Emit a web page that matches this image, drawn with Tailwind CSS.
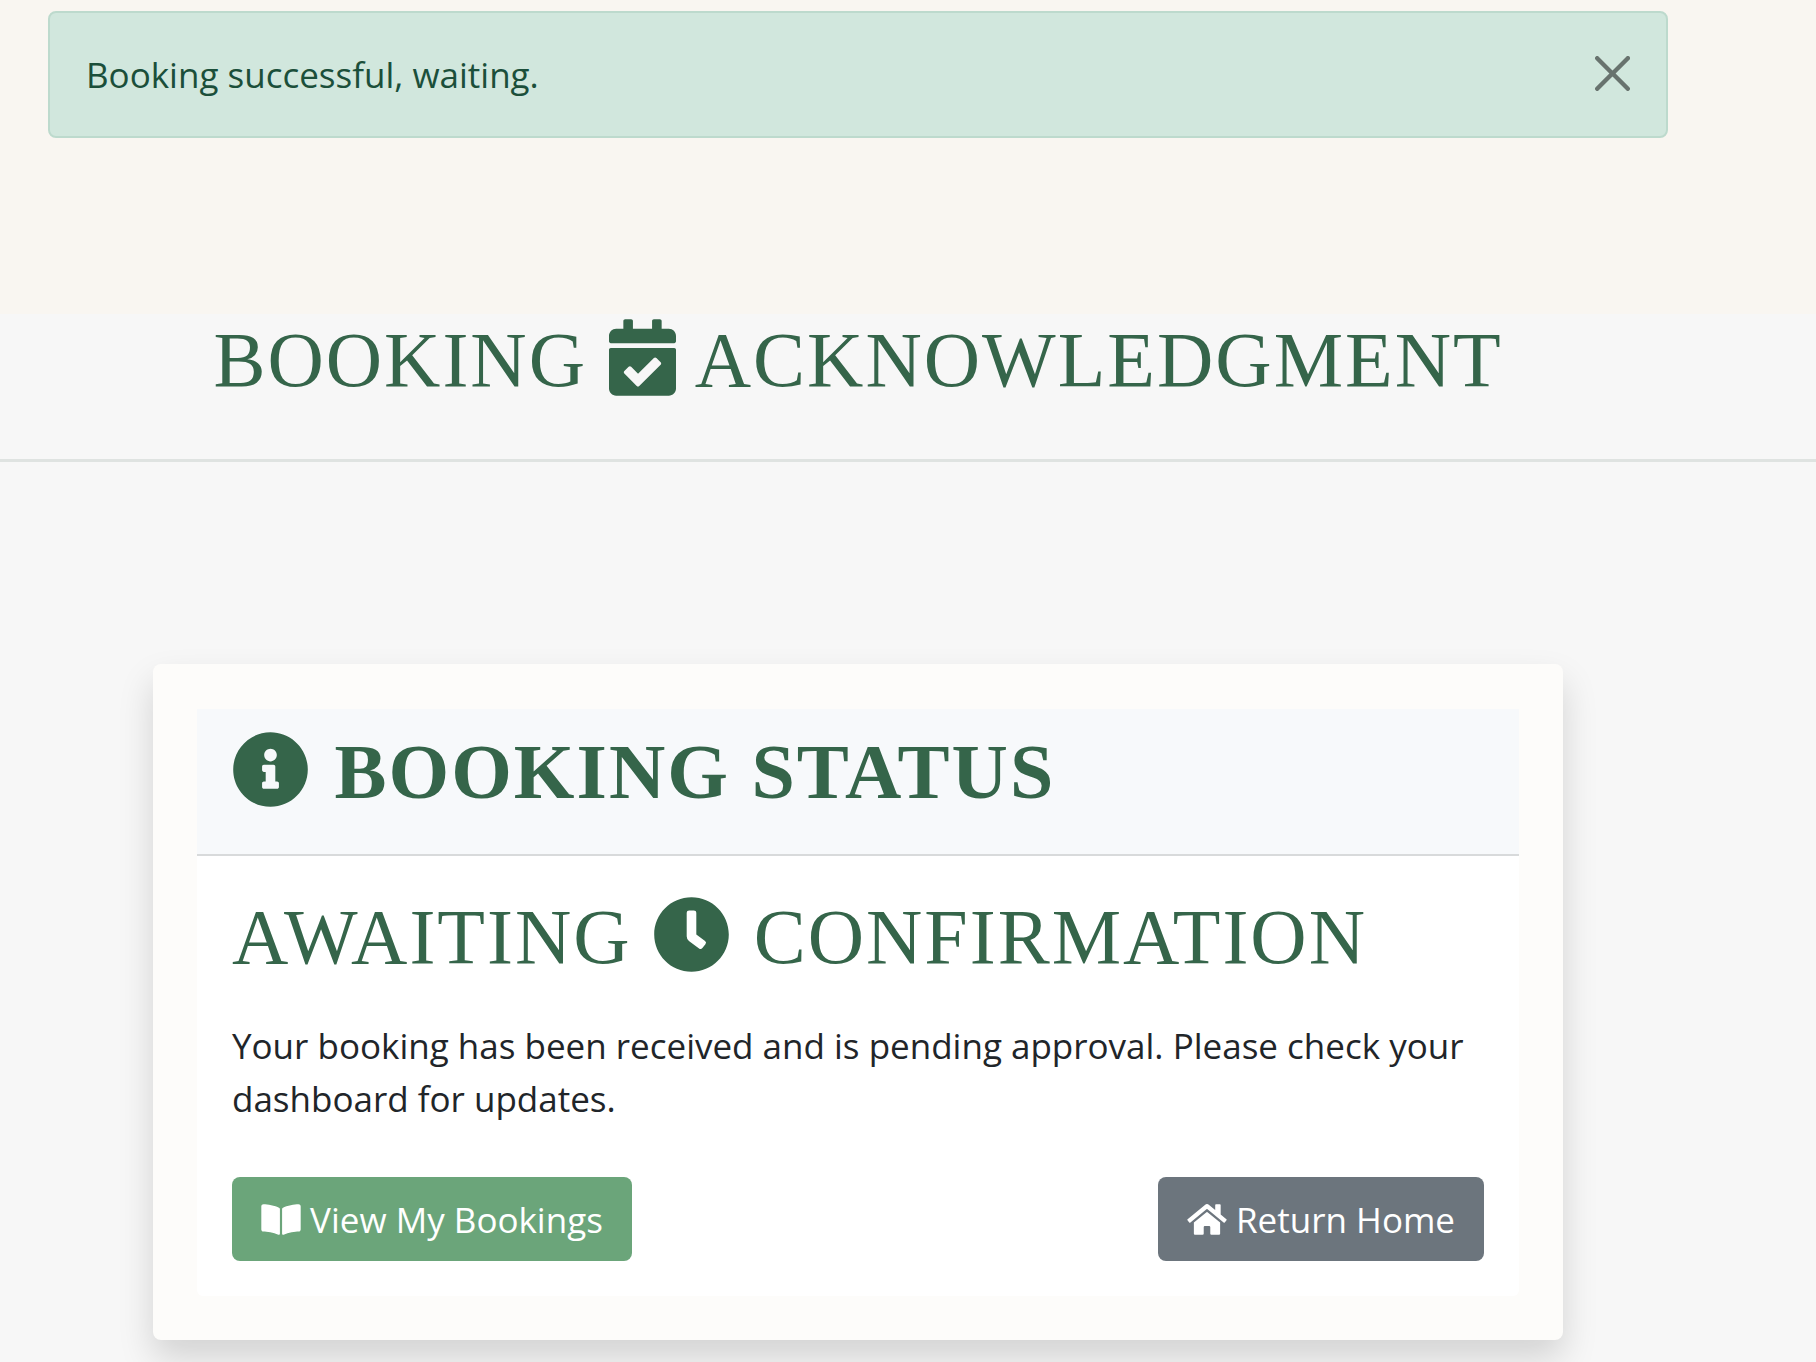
<!DOCTYPE html>
<html lang="en">
<head>
<meta charset="utf-8">
<meta name="viewport" content="width=device-width, initial-scale=1">
<title>Booking Acknowledgment</title>
<script src="https://cdn.jsdelivr.net/npm/@tailwindcss/browser@4"></script>
</head>
<body class="min-h-screen bg-[#f7f7f7] font-['Open_Sans',sans-serif] text-[35px] leading-[53px] text-[#212529]">
  <div class="bg-[#f9f6f1] pt-[11px] pr-[148px] pb-44 pl-12">
    <div role="alert" class="flex items-start justify-between rounded-lg border-2 border-[#bddacd] bg-[#d1e7dd] py-[35px] px-9 text-[#1b4f3a]">
      <p>Booking successful, waiting.</p>
      <button type="button" aria-label="Close" class="pt-2 text-black/50">
        <svg class="block size-[35px]" viewBox="0 0 16 16" fill="currentColor" aria-hidden="true"><path d="M.293.293a1 1 0 011.414 0L8 6.586 14.293.293a1 1 0 111.414 1.414L9.414 8l6.293 6.293a1 1 0 01-1.414 1.414L8 9.414l-6.293 6.293a1 1 0 01-1.414-1.414L6.586 8 .293 1.707a1 1 0 010-1.414z"/></svg>
      </button>
    </div>
  </div>

  <header class="border-b-3 border-[#dfe3e1] pr-[100px] pb-[53px] text-center">
    <h1 class="font-['Liberation_Serif',serif] text-[78px] leading-[92px] tracking-[2px] text-[#35654a]">BOOKING
      <svg class="mr-0.5 inline-block h-[77px] w-[67px] align-[-10px]" viewBox="0 0 448 512" fill="currentColor" aria-hidden="true"><path d="M436 160H12c-6.600 0-12-5.400-12-12v-36c0-26.500 21.500-48 48-48h48V12c0-6.600 5.400-12 12-12h40c6.600 0 12 5.400 12 12v52h128V12c0-6.600 5.400-12 12-12h40c6.600 0 12 5.400 12 12v52h48c26.500 0 48 21.500 48 48v36c0 6.600-5.400 12-12 12zM12 192h424c6.600 0 12 5.400 12 12v260c0 26.500-21.500 48-48 48H48c-26.500 0-48-21.500-48-48V204c0-6.600 5.400-12 12-12zm333.296 95.947l-28.169-28.398c-4.667-4.705-12.265-4.736-16.970-.068L194.120 364.665l-45.980-46.352c-4.667-4.705-12.266-4.736-16.971-.068l-28.397 28.170c-4.705 4.667-4.736 12.265-.068 16.970l82.601 83.269c4.667 4.705 12.265 4.736 16.970.068l142.953-141.805c4.705-4.667 4.736-12.265.068-16.970z"/></svg>
      ACKNOWLEDGMENT</h1>
  </header>

  <main class="pt-[202px] pr-[253px] pb-[22px] pl-[153px]">
    <section class="rounded-lg bg-[#fdfcfa] p-11 pt-[45px] shadow-[0_18px_35px_rgba(0,0,0,0.15)]">
      <div class="rounded-md bg-white">
        <div class="border-b-2 border-[#d8dadb] bg-[#f7f9fb] px-[35px] pt-[17px] pb-9">
          <h2 class="font-['Liberation_Serif',serif] text-[78px] leading-[92px] font-bold tracking-[2px] text-[#35654a]"><svg class="mr-1 inline-block size-[77px] align-[-10px]" viewBox="0 0 512 512" fill="currentColor" aria-hidden="true"><path d="M256 8C119.043 8 8 119.083 8 256c0 136.997 111.043 248 248 248s248-111.003 248-248C504 119.083 392.957 8 256 8zm0 110c23.196 0 42 18.804 42 42s-18.804 42-42 42-42-18.804-42-42 18.804-42 42-42zm56 254c0 6.627-5.373 12-12 12h-88c-6.627 0-12-5.373-12-12v-24c0-6.627 5.373-12 12-12h12v-64h-12c-6.627 0-12-5.373-12-12v-24c0-6.627 5.373-12 12-12h64c6.627 0 12 5.373 12 12v100h12c6.627 0 12 5.373 12 12v24z"/></svg>
            BOOKING STATUS</h2>
        </div>
        <div class="p-[35px]">
          <h3 class="font-['Liberation_Serif',serif] text-[78px] leading-[92px] tracking-[2px] text-[#35654a]">AWAITING
            <svg class="mr-0.5 inline-block size-[77px] align-[-10px]" viewBox="0 0 512 512" fill="currentColor" aria-hidden="true"><path d="M256,8C119,8,8,119,8,256S119,504,256,504,504,393,504,256,393,8,256,8Zm92.490,313h0l-20,25a16,16,0,0,1-22.490,2.500h0l-67-49.720a40,40,0,0,1-15-31.230V112a16,16,0,0,1,16-16h32a16,16,0,0,1,16,16V256l58,42.500A16,16,0,0,1,348.490,321Z"/></svg>
            CONFIRMATION</h3>
          <p class="mt-9">Your booking has been received and is pending approval. Please check your dashboard for updates.</p>
          <div class="mt-13 flex justify-between">
            <a href="#bookings" class="rounded-lg bg-[#6ba57a] px-[29px] pt-4 pb-[15px] text-white"><svg class="inline-block h-[35px] w-10 align-[-4px]" viewBox="0 0 576 512" fill="currentColor" aria-hidden="true"><path d="M542.220 32.050c-54.800 3.110-163.720 14.430-230.960 55.590-4.640 2.840-7.270 7.890-7.270 13.170v363.870c0 11.550 12.630 18.850 23.280 13.490 69.180-34.820 169.230-44.320 218.700-46.920 16.890-.890 30.020-14.430 30.020-30.660V62.750c.010-17.710-15.350-31.740-33.770-30.700zM264.730 87.640C197.500 46.480 88.580 35.170 33.780 32.050 15.360 31.010 0 45.040 0 62.750V400.600c0 16.240 13.130 29.780 30.020 30.660 49.490 2.600 149.590 12.110 218.770 46.950 10.620 5.350 23.210-1.940 23.210-13.460V100.630c0-5.290-2.620-10.140-7.270-12.990z"/></svg>
              View My Bookings</a>
            <a href="#home" class="rounded-lg bg-[#6c757d] px-[29px] pt-4 pb-[15px] text-white"><svg class="inline-block h-[35px] w-10 align-[-4px]" viewBox="0 0 576 512" fill="currentColor" aria-hidden="true"><path d="M280.370 148.260L96 300.110V464a16 16 0 0 0 16 16l112.060-.290a16 16 0 0 0 15.920-16V368a16 16 0 0 1 16-16h64a16 16 0 0 1 16 16v95.640a16 16 0 0 0 16 16.050L464 480a16 16 0 0 0 16-16V300L295.670 148.260a12.190 12.190 0 0 0-15.300 0zM571.600 251.470L488 182.560V44.050a12 12 0 0 0-12-12h-56a12 12 0 0 0-12 12v72.610L318.470 43a48 48 0 0 0-61 0L4.340 251.470a12 12 0 0 0-1.600 16.900l25.500 31A12 12 0 0 0 45.150 301l235.220-193.740a12.190 12.190 0 0 1 15.300 0L530.900 301a12 12 0 0 0 16.900-1.600l25.500-31a12 12 0 0 0-1.700-16.930z"/></svg>
              Return Home</a>
          </div>
        </div>
      </div>
    </section>
  </main>
</body>
</html>
